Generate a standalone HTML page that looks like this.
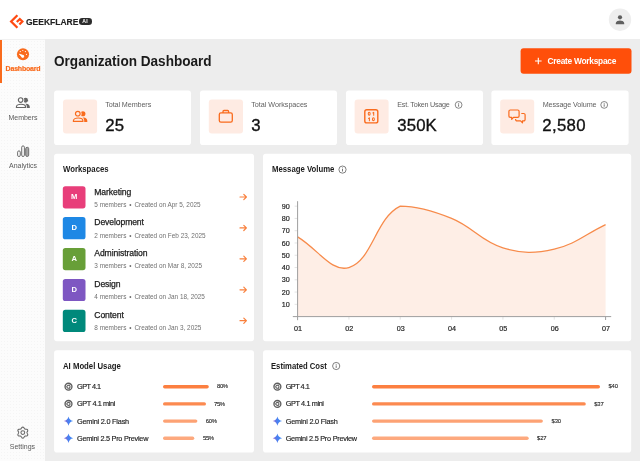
<!DOCTYPE html>
<html><head><meta charset="utf-8">
<style>
*{box-sizing:border-box;margin:0;padding:0}
html,body{width:640px;height:461px;overflow:hidden;background:#ededed;font-family:"Liberation Sans",sans-serif;color:#1c1c1c}
.abs{position:absolute}
#hdr{position:absolute;left:0;top:0;width:640px;height:39px;background:#fff}
#side{position:absolute;left:0;top:39px;width:45px;height:422px;background-color:#fcfcfc;background-image:radial-gradient(circle,#f5f5f5 .7px,rgba(245,245,245,0) .9px);background-size:3px 3px;border-top:1px solid #f1f1f1}
#act{position:absolute;left:0;top:40px;width:2px;height:43px;background:#f96b1d}
.nav{position:absolute;left:0;width:46px;text-align:center;font-size:7px;line-height:8px;color:#5a5a5a;white-space:nowrap}
.card{position:absolute}
.ib{display:none}
.sl{position:absolute;left:51.3px;top:9.4px;font-size:7.2px;line-height:9px;letter-spacing:-0.1px;color:#5f5f5f;white-space:nowrap}
.sv{position:absolute;left:51.3px;top:24.5px;font-size:16.8px;letter-spacing:0.1px;color:#111;white-space:nowrap;line-height:20px;-webkit-text-stroke:0.35px #111}
.ct{position:absolute;font-size:8.35px;line-height:10px;font-weight:bold;color:#1c1c1c;white-space:nowrap;transform:scaleX(.93);transform-origin:0 0;margin-top:.2px}
.t{position:absolute;white-space:nowrap}
.av{position:absolute;left:62.8px;width:22.7px;height:22.2px;color:#fff;font-size:7.6px;font-weight:bold;text-align:center;line-height:22.4px}
.wn{position:absolute;left:94.3px;font-size:8.6px;line-height:10px;color:#1c1c1c;white-space:nowrap;letter-spacing:-0.1px;-webkit-text-stroke:0.25px #1c1c1c}
.ws{position:absolute;left:94.3px;font-size:6.42px;line-height:8px;color:#707070;white-space:nowrap}
.ml{position:absolute;font-size:7.3px;line-height:9px;color:#222;white-space:nowrap;-webkit-text-stroke:0.15px #222}
.bar{position:absolute;height:3px;border-radius:1.5px;background:#f58b4e}
.pc{position:absolute;font-size:5.9px;line-height:8px;color:#222;white-space:nowrap;letter-spacing:-0.35px;-webkit-text-stroke:0.1px #222}
.yl{position:absolute;left:270.2px;width:19.5px;text-align:right;font-size:7.2px;line-height:8px;color:#222;-webkit-text-stroke:.18px #222}
.xl{position:absolute;top:324.5px;width:20px;margin-left:.4px;text-align:center;font-size:7.2px;line-height:8px;color:#222;-webkit-text-stroke:.18px #222}
svg{position:absolute;left:0;top:0;overflow:visible}
</style></head><body><div id="root" style="position:absolute;left:0;top:0;width:640px;height:461px;will-change:transform">
<div id="hdr"></div>
<div id="side"></div>
<div id="act"></div>

<svg width="640" height="461" viewBox="0 0 640 461"><rect x="54.1" y="90.5" width="136.90" height="54.50" rx="2.8" fill="#fff"/><rect x="200" y="90.5" width="137.00" height="54.50" rx="2.8" fill="#fff"/><rect x="346" y="90.5" width="137.00" height="54.50" rx="2.8" fill="#fff"/><rect x="491.4" y="90.5" width="137.20" height="54.50" rx="2.8" fill="#fff"/><rect x="63" y="99.4" width="34.10" height="34.00" rx="3" fill="#feebe3"/><rect x="208.8" y="99.4" width="34.20" height="34.00" rx="3" fill="#feebe3"/><rect x="354.6" y="99.4" width="34.00" height="34.00" rx="3" fill="#feebe3"/><rect x="500.2" y="99.4" width="34.00" height="34.00" rx="3" fill="#feebe3"/><rect x="54.1" y="153.7" width="199.90" height="187.60" rx="2.8" fill="#fff"/><rect x="263" y="153.7" width="368.20" height="187.60" rx="2.8" fill="#fff"/><rect x="54.1" y="350.15" width="199.90" height="102.35" rx="2.8" fill="#fff"/><rect x="263" y="350.15" width="368.20" height="102.35" rx="2.8" fill="#fff"/><rect x="520.6" y="48.3" width="110.90" height="25.40" rx="3" fill="#ff4f0a"/></svg>
<!-- logo -->
<svg width="640" height="461" viewBox="0 0 640 461">
 <g fill="none" stroke="#ff4a12" stroke-width="2.3" stroke-linejoin="miter">
  <path d="M17.4,15.2 L11.15,21.45 L17.4,27.7"/>
  <path d="M16.8,22 L19.8,19 L22.35,21.5 L19.4,24.45"/>
 </g>
 <!-- avatar -->
 <circle cx="620" cy="19.7" r="11.2" fill="#eeeeee"/>
 <circle cx="620" cy="17.3" r="2.1" fill="#5f5f5f"/>
 <path d="M615.8,24.2 v-1.2 c0,-1.7 2.8,-2.5 4.2,-2.5 s4.2,.8 4.2,2.5 v1.2z" fill="#5f5f5f"/>
</svg>
<div class="t" style="left:26.2px;top:15.4px;font-size:9.6px;line-height:13px;font-weight:bold;color:#222;-webkit-text-stroke:.15px #222;transform:scaleX(.885);transform-origin:0 0">GEEKFLARE</div>
<div class="abs" style="left:78.5px;top:18.3px;width:13.2px;height:6.4px;border-radius:3.2px;background:#2c2c2c"></div>
<div class="t" style="left:78.5px;top:18.9px;width:13.2px;text-align:center;font-size:5.1px;line-height:5.4px;font-weight:bold;color:#fff;letter-spacing:0.2px">AI</div>

<!-- sidebar -->
<svg width="640" height="461" viewBox="0 0 640 461">
 <!-- dashboard -->
 <circle cx="23" cy="54.2" r="6.05" fill="#f96b1d"/>
 <g fill="#fff"><circle cx="20.3" cy="51.6" r=".62"/><circle cx="22.8" cy="50.5" r=".62"/><circle cx="25.4" cy="51.6" r=".62"/><circle cx="26.5" cy="54.3" r=".62"/><circle cx="22.9" cy="56.5" r="1.25"/>
 <path d="M19.3,54.1 L23.6,55.5 L22.2,57.4 Z" stroke="#fff" stroke-width=".7" stroke-linejoin="round"/></g>
 <!-- members -->
 <defs>
  <mask id="mk" maskUnits="userSpaceOnUse" x="-1" y="-1" width="17" height="14"><rect x="-1" y="-1" width="17" height="14" fill="#fff"/><circle cx="5" cy="2.95" r="3.8" fill="#000"/></mask>
  <g id="mem">
   <circle cx="5" cy="2.95" r="2.35" fill="none" stroke="currentColor" stroke-width="1.2"/>
   <path d="M.6,10.7 v-.6 c0,-1.9 2.3,-2.8 4.75,-2.8 s4.75,.9 4.75,2.8 v.6z" fill="none" stroke="currentColor" stroke-width="1.2" stroke-linejoin="round"/>
   <circle cx="10.1" cy="3.1" r="2.55" fill="currentColor" mask="url(#mk)"/>
   <path d="M10.7,6.8 c2.3,.2 3.8,1.4 3.8,3.3 v1.2 h-3.1 v-1.4 c0,-1.2 -.6,-2.3 -1.7,-3.05z" fill="currentColor"/>
  </g>
 </defs>
 <use href="#mem" transform="translate(15.8,97.2) scale(.966)" style="color:#666"/>
 <!-- analytics -->
 <g fill="none" stroke="#666" stroke-width=".95">
  <rect x="17.6" y="150.9" width="2.7" height="5.6" rx="1.3"/>
  <rect x="21.7" y="145.9" width="2.7" height="10.6" rx="1.3"/>
 </g>
 <rect x="25.7" y="147.3" width="3" height="9.2" rx="1.4" fill="#a8a8a8" stroke="#666" stroke-width=".9"/>
 <!-- settings -->
 <g fill="none" stroke="#666" stroke-width="1.05" stroke-linejoin="round">
  <path d="M26.95,432.60 L27.03,432.23 L27.23,431.82 L27.48,431.34 L27.69,430.82 L27.75,430.29 L27.61,429.83 L27.27,429.47 L26.78,429.26 L26.23,429.17 L25.69,429.15 L25.23,429.12 L24.88,429.01 L24.59,428.75 L24.34,428.37 L24.06,427.92 L23.70,427.48 L23.28,427.16 L22.80,427.05 L22.32,427.16 L21.90,427.48 L21.54,427.92 L21.26,428.37 L21.01,428.75 L20.73,429.01 L20.37,429.12 L19.91,429.15 L19.37,429.17 L18.82,429.26 L18.33,429.47 L17.99,429.83 L17.85,430.29 L17.91,430.82 L18.12,431.34 L18.37,431.82 L18.57,432.23 L18.65,432.60 L18.57,432.97 L18.37,433.38 L18.12,433.86 L17.91,434.38 L17.85,434.91 L17.99,435.38 L18.33,435.73 L18.82,435.94 L19.37,436.03 L19.91,436.05 L20.37,436.08 L20.72,436.19 L21.01,436.45 L21.26,436.83 L21.54,437.28 L21.90,437.72 L22.32,438.04 L22.80,438.15 L23.28,438.04 L23.70,437.72 L24.06,437.28 L24.34,436.83 L24.59,436.45 L24.88,436.19 L25.23,436.08 L25.69,436.05 L26.23,436.03 L26.78,435.94 L27.27,435.73 L27.61,435.38 L27.75,434.91 L27.69,434.38 L27.48,433.86 L27.23,433.38 L27.03,432.97Z"/>
  <circle cx="22.8" cy="432.6" r="1.9"/>
 </g>
</svg>
<div class="nav" style="top:64.6px;color:#f96b1d;font-weight:bold;letter-spacing:-0.2px;-webkit-text-stroke:.2px #f96b1d">Dashboard</div>
<div class="nav" style="top:113.8px">Members</div>
<div class="nav" style="top:161.7px">Analytics</div>
<div class="nav" style="top:443.2px;left:-.6px">Settings</div>

<!-- title + button -->
<div class="t" style="left:53.6px;top:52px;font-size:14.2px;font-weight:bold;line-height:18px;color:#1a1a1a;transform:scaleX(.957);transform-origin:0 0">Organization Dashboard</div>
<svg width="640" height="461" viewBox="0 0 640 461"><path d="M535,61 h6.6 M538.3,57.7 v6.6" stroke="#fff" stroke-width="1.1"/></svg>
<div class="t" style="left:547.6px;top:56px;font-size:8.4px;font-weight:bold;color:#fff;line-height:10px;letter-spacing:-0.28px">Create Workspace</div>

<!-- stat cards -->
<div class="card" style="left:54px;top:91px;width:137px;height:54px"><div class="ib"></div><div class="sl">Total Members</div><div class="sv">25</div></div>
<div class="card" style="left:200px;top:91px;width:137px;height:54px"><div class="ib"></div><div class="sl" style="letter-spacing:-.03px">Total Workspaces</div><div class="sv">3</div></div>
<div class="card" style="left:346px;top:91px;width:137px;height:54px"><div class="ib"></div><div class="sl" style="letter-spacing:-.25px">Est. Token Usage</div><div class="sv">350K</div></div>
<div class="card" style="left:491px;top:91px;width:138px;height:54px"><div class="ib"></div><div class="sl" style="left:51.7px">Message Volume</div><div class="sv" style="letter-spacing:.3px">2,580</div></div>

<svg width="640" height="461" viewBox="0 0 640 461">
 <!-- members icon orange -->
 <use href="#mem" transform="translate(72.8,110.7)" style="color:#f96b1d"/>
 <!-- briefcase -->
 <g fill="none" stroke="#f96b1d" stroke-width="1.3">
  <rect x="219.3" y="112.9" width="13" height="9.2" rx="1.6"/>
  <path d="M223,112.9 v-1.4 a1,1 0 0 1 1,-1 h3.6 a1,1 0 0 1 1,1 v1.4"/>
 </g>
 <!-- token -->
 <rect x="364.8" y="109.7" width="13" height="13.2" rx="2" fill="none" stroke="#f96b1d" stroke-width="1.4"/>
 <g fill="none" stroke="#f96b1d" stroke-width="1.05" stroke-linecap="round" stroke-linejoin="round">
  <ellipse cx="369.2" cy="113.7" rx=".95" ry="1.4"/><path d="M372.9,112.9 l.8,-.6 v2.9"/>
  <path d="M368.6,118.4 l.8,-.6 v2.9"/><ellipse cx="373.4" cy="119.2" rx=".95" ry="1.4"/>
 </g>
 <!-- messages -->
 <g fill="none" stroke="#f96b1d" stroke-width="1.2" stroke-linejoin="round">
  <path d="M510.3,110 h7.4 a1.4,1.4 0 0 1 1.4,1.4 v4.6 a1.4,1.4 0 0 1 -1.4,1.4 h-4.2 l-1.8,1.9 v-1.9 h-1.4 a1.4,1.4 0 0 1 -1.4,-1.4 v-4.6 a1.4,1.4 0 0 1 1.4,-1.4z"/>
  <path d="M521.3,113.5 h2.4 a1.4,1.4 0 0 1 1.4,1.4 v4.6 a1.4,1.4 0 0 1 -1.4,1.4 h-1.2 v1.9 l-1.9,-1.9 h-3.6 a1.4,1.4 0 0 1 -1.4,-1.4 v-.4"/>
 </g>
 <!-- info icons -->
 <g fill="none" stroke="#555" stroke-width=".7">
  <circle cx="458.6" cy="104.9" r="3.4"/><circle cx="604.2" cy="104.9" r="3.4"/>
  
 </g>
 <g stroke="#555" stroke-width=".8">
  <path d="M458.6,104.3 v2.4 M458.6,102.9 v.8 M604.2,104.3 v2.4 M604.2,102.9 v.8"/>
 </g>
</svg>


<!-- workspaces -->
<svg width="640" height="461" viewBox="0 0 640 461"><rect x="62.8" y="186.20" width="22.7" height="22.2" rx="2.6" fill="#e83e7a"/><rect x="62.8" y="217.10" width="22.7" height="22.2" rx="2.6" fill="#1e88e5"/><rect x="62.8" y="248.00" width="22.7" height="22.2" rx="2.6" fill="#689f38"/><rect x="62.8" y="278.90" width="22.7" height="22.2" rx="2.6" fill="#7e57c2"/><rect x="62.8" y="309.80" width="22.7" height="22.2" rx="2.6" fill="#00897b"/></svg>

<div class="ct" style="left:62.6px;top:164px">Workspaces</div>
<div class="av" style="top:186.2px">M</div>
<div class="wn" style="top:186.5px">Marketing</div><div class="ws" style="top:200.6px">5 members<span style="margin:0 2.9px">•</span>Created on Apr 5, 2025</div>
<div class="av" style="top:217.1px">D</div>
<div class="wn" style="top:217.4px">Development</div><div class="ws" style="top:231.5px">2 members<span style="margin:0 2.9px">•</span>Created on Feb 23, 2025</div>
<div class="av" style="top:248.0px">A</div>
<div class="wn" style="top:248.3px">Administration</div><div class="ws" style="top:262.4px">3 members<span style="margin:0 2.9px">•</span>Created on Mar 8, 2025</div>
<div class="av" style="top:278.9px">D</div>
<div class="wn" style="top:279.3px">Design</div><div class="ws" style="top:293.4px">4 members<span style="margin:0 2.9px">•</span>Created on Jan 18, 2025</div>
<div class="av" style="top:309.8px">C</div>
<div class="wn" style="top:310.2px">Content</div><div class="ws" style="top:324.3px">8 members<span style="margin:0 2.9px">•</span>Created on Jan 3, 2025</div>
<svg width="640" height="461" viewBox="0 0 640 461"><g fill="none" stroke="#f9803d" stroke-width="1.2" stroke-linecap="round" stroke-linejoin="round">
 <path id="ar" d="M240,197 h6.4 M243.8,194.4 l2.6,2.6 -2.6,2.6"/>
 <use href="#ar" y="30.9"/><use href="#ar" y="61.8"/><use href="#ar" y="92.8"/><use href="#ar" y="123.7"/>
</g></svg>

<!-- chart -->
<div class="ct" style="left:271.5px;top:164.3px">Message Volume</div>
<svg width="640" height="461" viewBox="0 0 640 461">
 <path d="M297.60,236.85C318.13,249.12 331.36,272.77 348.93,267.52C372.43,260.50 375.52,218.00 400.26,206.17C416.58,206.17 432.23,210.57 451.59,218.44C473.30,227.26 480.93,241.32 502.92,247.89C522.00,253.59 534.77,253.54 554.25,249.12C575.83,244.21 585.05,234.39 605.58,224.58L605.58,316.6L297.6,316.6Z" fill="#feeee6"/>
 <path d="M297.60,236.85C318.13,249.12 331.36,272.77 348.93,267.52C372.43,260.50 375.52,218.00 400.26,206.17C416.58,206.17 432.23,210.57 451.59,218.44C473.30,227.26 480.93,241.32 502.92,247.89C522.00,253.59 534.77,253.54 554.25,249.12C575.83,244.21 585.05,234.39 605.58,224.58" fill="none" stroke="#f78b4b" stroke-width="1.3"/>
 <path d="M294.6,304.33 h3 M294.6,292.06 h3 M294.6,279.79 h3 M294.6,267.52 h3 M294.6,255.25 h3 M294.6,242.98 h3 M294.6,230.71 h3 M294.6,218.44 h3 M294.6,206.17 h3 M348.93,316.6 v3 M400.26,316.6 v3 M451.59,316.6 v3 M502.92,316.6 v3 M554.25,316.6 v3 " stroke="#dcdcdc" stroke-width=".8" fill="none"/>
 <path d="M297.6,201.2 V320.2" stroke="#9e9e9e" stroke-width="1"/>
 <path d="M292.8,316.6 H611.2" stroke="#9e9e9e" stroke-width="1"/>
 <path d="M605.6,316.6 v3.4" stroke="#9e9e9e" stroke-width="1"/>
</svg>
<div class="yl" style="top:202.7px">90</div><div class="yl" style="top:215.0px">80</div><div class="yl" style="top:227.2px">70</div>
<div class="yl" style="top:239.5px">60</div><div class="yl" style="top:251.8px">50</div><div class="yl" style="top:264.0px">40</div>
<div class="yl" style="top:276.3px">30</div><div class="yl" style="top:288.6px">20</div><div class="yl" style="top:300.9px">10</div>
<div class="xl" style="left:287.6px">01</div><div class="xl" style="left:338.9px">02</div><div class="xl" style="left:390.3px">03</div><div class="xl" style="left:441.6px">04</div><div class="xl" style="left:492.9px">05</div><div class="xl" style="left:544.3px">06</div><div class="xl" style="left:595.6px">07</div>

<!-- AI model usage -->
<div class="ct" style="left:62.6px;top:360.8px">AI Model Usage</div>
<div class="ml" style="left:77px;top:382.2px;letter-spacing:-0.5px">GPT 4.1</div>
<div class="ml" style="left:77px;top:399.4px;letter-spacing:-0.38px">GPT 4.1 mini</div>
<div class="ml" style="left:77px;top:416.6px;letter-spacing:-0.2px">Gemini 2.0 Flash</div>
<div class="ml" style="left:77px;top:433.8px;letter-spacing:-0.25px">Gemini 2.5 Pro Preview</div>
<div class="pc" style="left:217px;top:382.3px">80%</div>
<div class="pc" style="left:214px;top:399.5px">75%</div>
<div class="pc" style="left:205.8px;top:416.7px">60%</div>
<div class="pc" style="left:203px;top:433.9px">55%</div>

<!-- Estimated cost -->
<div class="ct" style="left:271.4px;top:360.8px;transform:scaleX(.92)">Estimated Cost</div>
<div class="ml" style="left:285.7px;top:382.2px;letter-spacing:-0.5px">GPT 4.1</div>
<div class="ml" style="left:285.7px;top:399.4px;letter-spacing:-0.38px">GPT 4.1 mini</div>
<div class="ml" style="left:285.7px;top:416.6px;letter-spacing:-0.2px">Gemini 2.0 Flash</div>
<div class="ml" style="left:285.7px;top:433.8px;letter-spacing:-0.25px">Gemini 2.5 Pro Preview</div>
<div class="pc" style="left:608.5px;top:382.3px;letter-spacing:-.2px">$40</div>
<div class="pc" style="left:594.3px;top:399.5px;letter-spacing:-.2px">$37</div>
<div class="pc" style="left:551.6px;top:416.7px;letter-spacing:-.2px">$30</div>
<div class="pc" style="left:537.1px;top:433.9px;letter-spacing:-.2px">$27</div>

<svg width="640" height="461" viewBox="0 0 640 461"><g fill="none" stroke="#555" stroke-width=".75"><circle cx="342.5" cy="169.6" r="3.6"/><circle cx="336.2" cy="366" r="3.6"/></g><path d="M342.5,169 v2.5 M342.5,167.5 v.8 M336.2,365.4 v2.5 M336.2,363.9 v.8" stroke="#555" stroke-width=".8"/></svg>
<svg width="640" height="461" viewBox="0 0 640 461"><g fill="none" stroke-width="3.4" stroke-linecap="round"><path d="M164.7,386.7 H207.1" stroke="#fc7f40"/><path d="M164.7,403.9 H204.3" stroke="#fc8a50"/><path d="M164.7,421.1 H195.7" stroke="#fda274"/><path d="M164.7,438.3 H192.6" stroke="#fda97e"/><path d="M373.7,386.7 H598.3" stroke="#fc7f40"/><path d="M373.7,403.9 H584.1" stroke="#fc8a50"/><path d="M373.7,421.1 H541.2" stroke="#fda274"/><path d="M373.7,438.3 H527.0" stroke="#fda97e"/></g></svg>
<!-- model icons -->
<svg width="640" height="461" viewBox="0 0 640 461">
 <defs>
  <linearGradient id="gg" x1="0" y1=".6" x2="1" y2=".4"><stop offset="0" stop-color="#a060cc"/><stop offset=".45" stop-color="#4a7fef"/><stop offset="1" stop-color="#3f8df8"/></linearGradient>
  <g id="oa" fill="none" stroke="#5e5e5e"><circle r="3.45" stroke-width="1.35"/><circle r="1.55" stroke-width="1.05"/><path d="M1.39,0.80 L0.59,3.35 M-1.39,0.80 L-3.19,-1.16 M-0.00,-1.60 L2.60,-2.19 " stroke-width=".6"/></g>
  <path id="gm" d="M0,-4.7 C.5,-2.2 2.2,-.5 4.7,0 C2.2,.5 .5,2.2 0,4.7 C-.5,2.2 -2.2,.5 -4.7,0 C-2.2,-.5 -.5,-2.2 0,-4.7Z" fill="url(#gg)"/>
 </defs>
 <use href="#oa" x="68.5" y="386.7"/><use href="#oa" x="68.5" y="403.9"/>
 <use href="#gm" x="68.5" y="421.1"/><use href="#gm" x="68.5" y="438.3"/>
 <use href="#oa" x="277.4" y="386.7"/><use href="#oa" x="277.4" y="403.9"/>
 <use href="#gm" x="277.4" y="421.1"/><use href="#gm" x="277.4" y="438.3"/>
</svg>
</div></body></html>
